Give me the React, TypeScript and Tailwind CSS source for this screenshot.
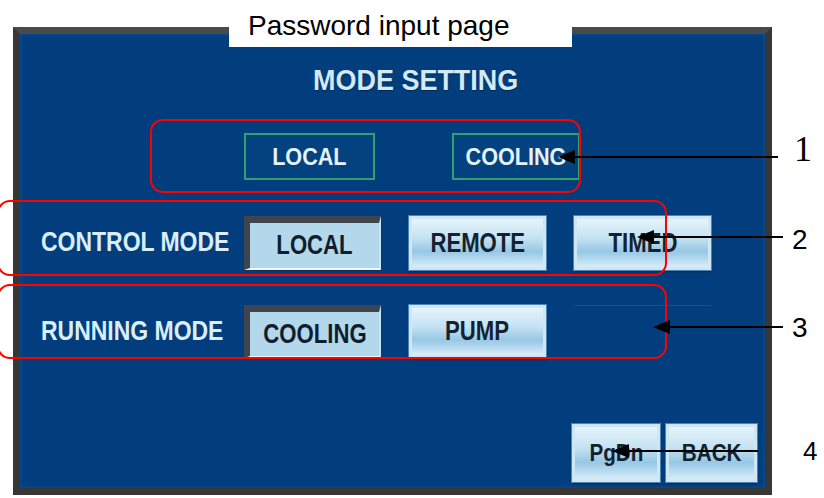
import React from 'react';

const HmiButton: React.FC<{ label: string; selected?: boolean; w?: string; h?: string; text?: string }> = ({
  label,
  selected,
  w = 'w-[137px]',
  h = 'h-[54px]',
  text = 'text-[27px] scale-x-[0.82]',
}) => {
  if (selected) {
    return (
      <div
        className={`${w} ${h} shrink-0 flex items-center justify-center bg-[#b3d7eb] border-t-[7px] border-l-[6px] border-t-[#3e454e] border-l-[#3e454e] border-b-2 border-b-[#eef7fb] border-r-2 border-r-[#c8e3f1] shadow-[0_1px_0_#0e2f5a]`}
      >
        <span className={`inline-block ${text} font-bold leading-none text-[#0f1e2e]`}>{label}</span>
      </div>
    );
  }
  return (
    <div
      className={`${w} ${h} shrink-0 flex items-center justify-center border-[3px] border-[#cfe7f4] bg-[linear-gradient(to_bottom,#e6f4fb,#c4e2f2_40%,#98c7e4_68%,#b7dbef_85%,#d9eef8)] shadow-[0_0_0_1px_#4d82b3,0_2px_2px_#0c2c55]`}
    >
      <span className={`inline-block ${text} font-bold leading-none text-[#13222f]`}>{label}</span>
    </div>
  );
};

const ModeBox: React.FC<{ label: string; w: string }> = ({ label, w }) => (
  <div className={`${w} h-[47px] flex items-center justify-center border-2 border-[#33a070] bg-[#04417f]`}>
    <span className="inline-block text-[24px] scale-x-[0.9] font-bold leading-none text-[#e4f2f9]">{label}</span>
  </div>
);

const Arrow: React.FC<{ x1: number; x2: number; y: number }> = ({ x1, x2, y }) => (
  <g>
    <line x1={x1} y1={y} x2={x2 + 14} y2={y} stroke="#000" strokeWidth={2} />
    <polygon points={`${x2},${y} ${x2 + 17},${y - 7} ${x2 + 17},${y + 7}`} fill="#000" />
  </g>
);

const App: React.FC = () => {
  return (
    <div className="relative w-[824px] h-[498px] bg-white overflow-hidden font-['Liberation_Sans',Arial,sans-serif]">
      <div className="pt-[27px] pl-[13px]">
        <div className="w-[759px] h-[468px] border-[7px] border-[#393735] border-t-[#4a4a49] bg-[#023e7d] shadow-[inset_0_0_4px_#0b56a3] flex flex-col">
          <div className="h-[40px] mt-[26px] pl-[293px] flex items-center">
            <span className="inline-block origin-left scale-x-[0.93] text-[29px] font-bold leading-none text-[#d3eaf5] [text-shadow:0_1px_1px_#01264d]">
              MODE SETTING
            </span>
          </div>

          <div className="mt-[33px] pl-[224px] flex items-center gap-[77px]">
            <ModeBox label="LOCAL" w="w-[131px]" />
            <ModeBox label="COOLING" w="w-[128px]" />
          </div>

          <div className="mt-[36px] pl-[21px] flex items-center">
            <div className="w-[203px] shrink-0">
              <span className="inline-block origin-left scale-x-[0.82] whitespace-nowrap text-[28px] font-bold leading-none text-[#dbeef7]">
                CONTROL MODE
              </span>
            </div>
            <div className="flex gap-[28px]">
              <HmiButton label="LOCAL" selected />
              <HmiButton label="REMOTE" />
              <HmiButton label="TIMED" />
            </div>
          </div>

          <div className="mt-[35px] pl-[21px] flex items-center">
            <div className="w-[203px] shrink-0">
              <span className="inline-block origin-left scale-x-[0.82] whitespace-nowrap text-[28px] font-bold leading-none text-[#dbeef7]">
                RUNNING MODE
              </span>
            </div>
            <div className="flex gap-[28px]">
              <HmiButton label="COOLING" selected h="h-[53px]" />
              <HmiButton label="PUMP" h="h-[53px]" />
              <div className="w-[137px] h-[53px] border-t border-[#1d4f86]" />
            </div>
          </div>

          <div className="mt-[66px] pr-[8px] flex justify-end gap-[6px]">
            <HmiButton label="PgDn" w="w-[88px]" h="h-[58px]" text="text-[24px] scale-x-[0.86]" />
            <HmiButton label="BACK" w="w-[91px]" h="h-[58px]" text="text-[24px] scale-x-[0.86]" />
          </div>
        </div>
      </div>

      <div className="absolute left-[229px] top-0 w-[343px] h-[47px] bg-white flex items-center pl-[19px] pt-[4px]">
        <span className="text-[28px] leading-none text-black whitespace-nowrap">Password input page</span>
      </div>

      <svg className="absolute inset-0 pointer-events-none" width={824} height={498} viewBox="0 0 824 498">
        <rect x={151} y={120} width={429} height={72} rx={12} fill="none" stroke="#ff0000" strokeWidth={2} />
        <rect x={-2} y={201} width={668} height={74} rx={12} fill="none" stroke="#ff0000" strokeWidth={2} />
        <rect x={-2} y={285} width={668} height={73} rx={12} fill="none" stroke="#ff0000" strokeWidth={2} />
        <Arrow x1={778} x2={558} y={157} />
        <Arrow x1={783} x2={637} y={237} />
        <Arrow x1={783} x2={653} y={327} />
        <Arrow x1={758} x2={612} y={451} />
      </svg>

      <span className="absolute left-[794px] top-[131px] text-[36px] leading-none font-['Liberation_Serif',serif] text-black">1</span>
      <span className="absolute left-[792px] top-[226px] text-[28px] leading-none text-black">2</span>
      <span className="absolute left-[792px] top-[314px] text-[28px] leading-none text-black">3</span>
      <span className="absolute left-[803px] top-[438px] text-[26px] leading-none text-black">4</span>
    </div>
  );
};

export default App;
